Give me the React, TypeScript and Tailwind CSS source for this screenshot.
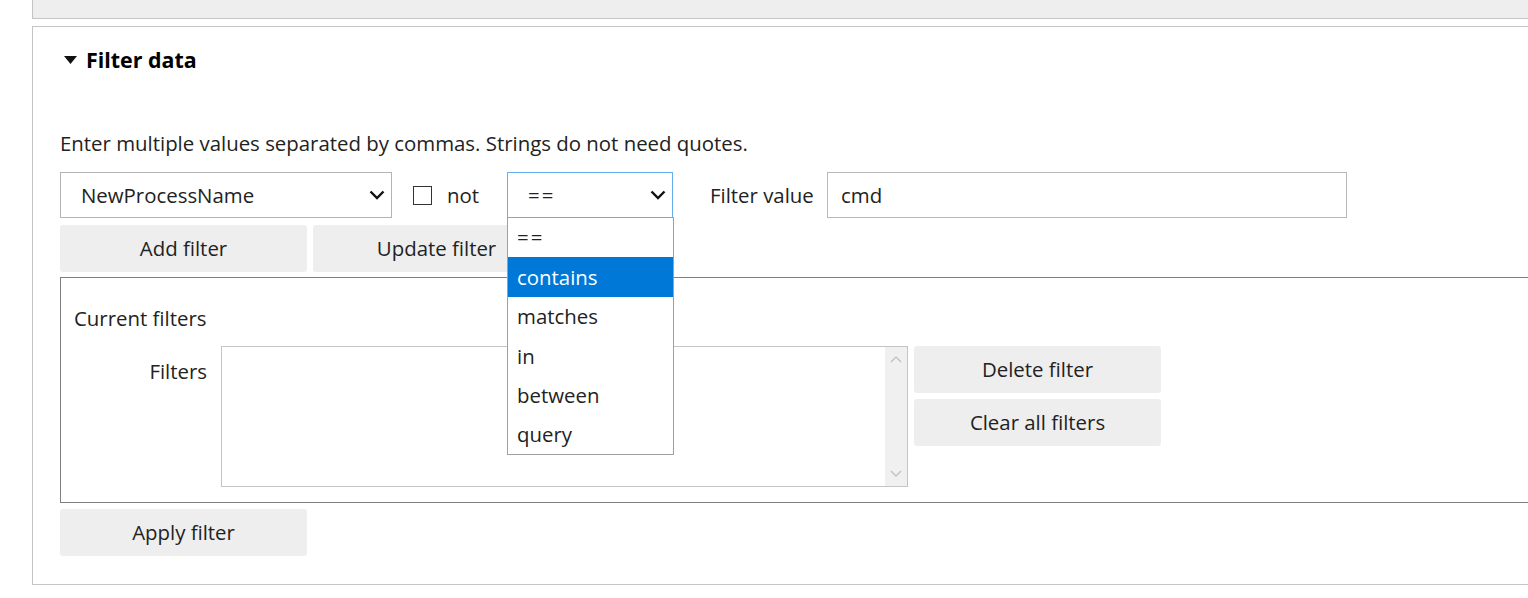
import React from 'react';

const font = { fontFamily: '"Open Sans", "Noto Sans", sans-serif' };

function Chevron() {
  return (
    <svg width="16" height="10" viewBox="0 0 16 10" className="shrink-0">
      <polyline points="1.5,1.5 8,8 14.5,1.5" fill="none" stroke="#111" strokeWidth="2.4" />
    </svg>
  );
}

function GrayButton({ label, className = '' }: { label: string; className?: string }) {
  return (
    <button
      type="button"
      className={`h-[47px] w-[247px] rounded-[3px] bg-[#eeeeee] text-[20.4px] text-[#222] ${className}`}
    >
      {label}
    </button>
  );
}

const ops = ['==', 'contains', 'matches', 'in', 'between', 'query'];

export default function App() {
  return (
    <div className="min-h-[598px] w-[1528px] overflow-hidden bg-white text-[20.4px] text-[#222]" style={font}>
      {/* previous section, collapsed */}
      <div className="ml-[32px] h-[19px] border-b border-l border-[#c4c4c4] bg-[#eeeeee]" />

      <section className="ml-[32px] mt-[7px] border-b border-l border-t border-[#c4c4c4] pb-[28px] pl-[27px] pt-[18px]">
        <div className="flex h-[30px] items-center gap-[9px] pl-[4px]">
          <svg width="13" height="8" viewBox="0 0 13 8">
            <polygon points="0,0 13,0 6.5,8" fill="#111" />
          </svg>
          <h2 className="text-[21.4px] font-bold text-black">Filter data</h2>
        </div>

        <p className="mt-[54px] h-[28px] leading-[28px]">
          Enter multiple values separated by commas. Strings do not need quotes.
        </p>

        <div className="mt-[15px] flex h-[46px] items-center">
          <div className="flex h-[46px] w-[332px] items-center justify-between border border-[#b4b4b4] pl-[20px] pr-[6px]">
            <span>NewProcessName</span>
            <Chevron />
          </div>
          <span className="ml-[21px] h-[19px] w-[19px] border border-[#333]" />
          <span className="ml-[15px] w-[33px]">not</span>

          <div className="relative ml-[27px]">
            <div className="flex h-[46px] w-[166px] items-center justify-between border border-[#66afef] pl-[20px] pr-[6px]">
              <span className="tracking-[2px]">==</span>
              <Chevron />
            </div>
            <ul className="absolute left-0 top-[45px] z-10 w-[167px] border border-[#a0a0a0] bg-white">
              {ops.map((op) => (
                <li
                  key={op}
                  className={`flex h-[39.4px] items-center pl-[9px] ${
                    op === 'contains' ? 'bg-[#0078d7] text-white' : 'text-[#222]'
                  }`}
                >
                  <span className={op === '==' ? 'tracking-[2px]' : ''}>{op}</span>
                </li>
              ))}
            </ul>
          </div>

          <span className="ml-[37px] w-[104px]">Filter value</span>
          <div className="ml-[13px] flex h-[46px] w-[520px] items-center border border-[#b8b8b8] pl-[13px]">
            cmd
          </div>
        </div>

        <div className="mt-[7px] flex gap-[6px]">
          <GrayButton label="Add filter" />
          <GrayButton label="Update filter" />
        </div>

        <fieldset className="mt-[5px] h-[226px] border-b border-l border-t border-[#808080] pl-[13px] pt-[26px]">
          <div className="h-[28px] leading-[28px]">Current filters</div>
          <div className="mt-[14px] flex">
            <label className="w-[133px] pt-[10px] text-right">Filters</label>
            <div className="ml-[14px] flex h-[141px] w-[687px] justify-end border border-[#c4c4c4] bg-white">
              <div className="flex w-[22px] flex-col items-center justify-between bg-[#f0f0f0] py-[8px]">
                <svg width="12" height="8" viewBox="0 0 12 8">
                  <polyline points="1,7 6,2 11,7" fill="none" stroke="#c4c4c4" strokeWidth="1.5" />
                </svg>
                <svg width="12" height="8" viewBox="0 0 12 8">
                  <polyline points="1,1 6,6 11,1" fill="none" stroke="#c4c4c4" strokeWidth="1.5" />
                </svg>
              </div>
            </div>
            <div className="ml-[6px] flex flex-col gap-[6px]">
              <GrayButton label="Delete filter" />
              <GrayButton label="Clear all filters" />
            </div>
          </div>
        </fieldset>

        <GrayButton label="Apply filter" className="mt-[6px]" />
      </section>
    </div>
  );
}
